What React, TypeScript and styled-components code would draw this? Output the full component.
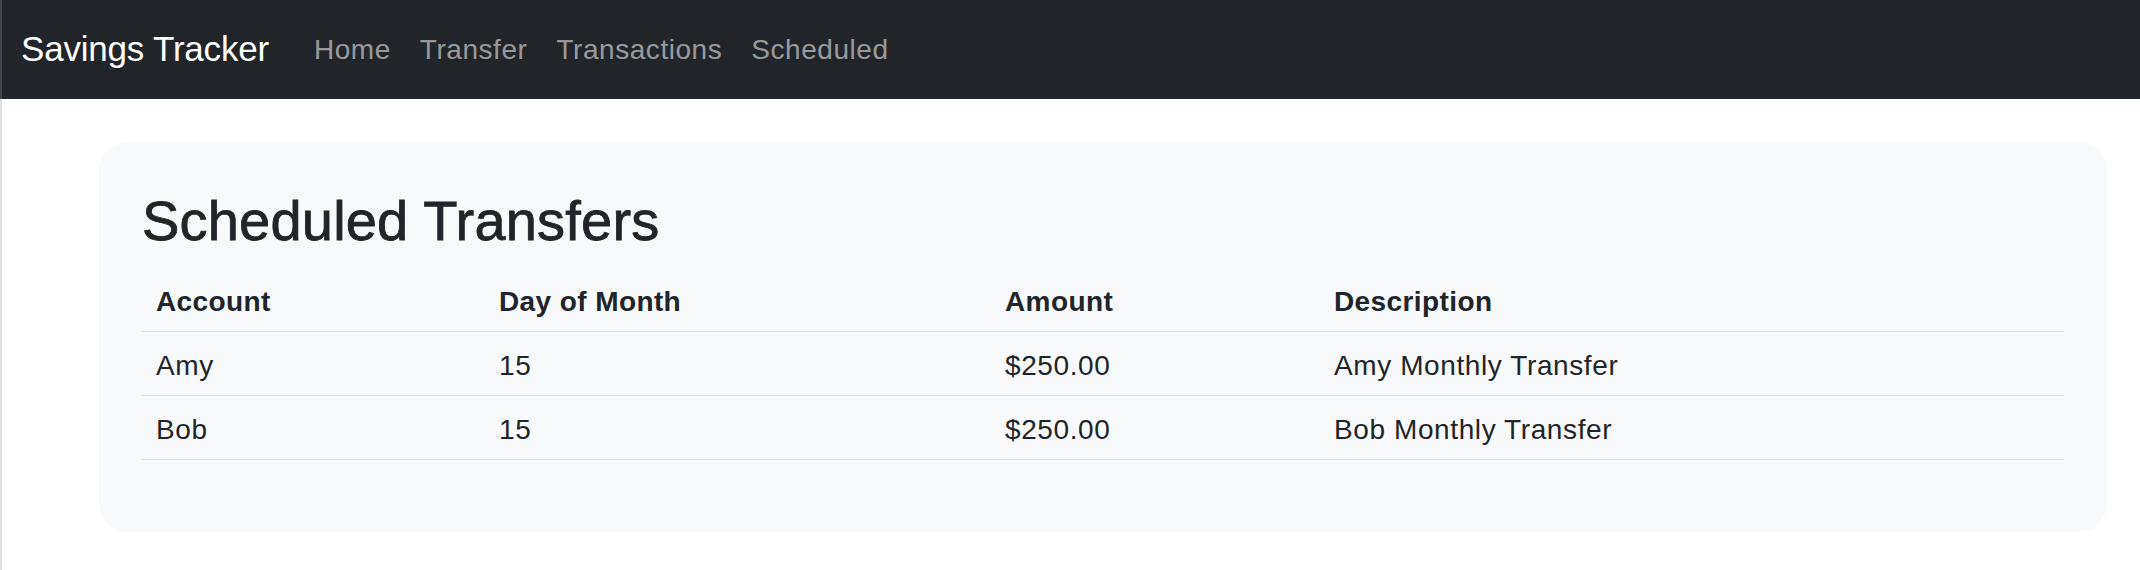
import React from "react";
import styled, { createGlobalStyle } from "styled-components";

const GlobalStyle = createGlobalStyle`
  html, body {
    margin: 0;
    padding: 0;
    background: #ffffff;
  }
  body {
    font-family: "Liberation Sans", Arial, sans-serif;
    color: #212529;
  }
  body::before {
    content: "";
    position: fixed;
    left: 0;
    top: 0;
    bottom: 0;
    width: 2px;
    background: rgba(150, 150, 150, 0.3);
    z-index: 10;
  }
`;

const Navbar = styled.nav`
  box-sizing: border-box;
  height: 99px;
  background: #212529;
  display: flex;
  align-items: center;
  padding: 0 21px;
`;

const Brand = styled.a`
  font-size: 35px;
  line-height: 1.5;
  letter-spacing: -0.2px;
  color: #ffffff;
  text-decoration: none;
  white-space: nowrap;
  margin-right: 45px;
`;

const NavList = styled.ul`
  display: flex;
  align-items: center;
  gap: 29px;
  list-style: none;
  margin: 0;
  padding: 0;
`;

const NavLink = styled.a`
  font-size: 28px;
  line-height: 1.5;
  letter-spacing: 0.55px;
  color: rgba(255, 255, 255, 0.55);
  text-decoration: none;
  white-space: nowrap;
`;

const Card = styled.section`
  margin: 43px 33px 0 99px;
  background: #f8f9fa;
  border-radius: 28px;
  padding: 45px 43px 44px;
`;

const Title = styled.h2`
  margin: 0 0 14px;
  font-size: 56px;
  line-height: 67px;
  font-weight: 500;
  letter-spacing: 0.2px;
  color: #212529;
  -webkit-text-stroke: 0.8px #212529;
`;

const Table = styled.table`
  width: 100%;
  table-layout: fixed;
  border-collapse: collapse;
  margin-bottom: 28px;
`;

const Col = styled.col<{ $width: number }>`
  width: ${(p) => p.$width}px;
`;

const HeadCell = styled.th`
  text-align: left;
  font-size: 28px;
  line-height: 41px;
  font-weight: 700;
  letter-spacing: 0.4px;
  padding: 13px 14px 9px;
  border-bottom: 1px solid #dee2e6;
  color: #212529;
`;

const Cell = styled.td`
  font-size: 28px;
  line-height: 41px;
  letter-spacing: 0.6px;
  padding: 13px 14px 9px;
  border-bottom: 1px solid #dee2e6;
  color: #212529;
  white-space: nowrap;
`;

const links = ["Home", "Transfer", "Transactions", "Scheduled"];

const columns = [
  { label: "Account", width: 343 },
  { label: "Day of Month", width: 506 },
  { label: "Amount", width: 329 },
  { label: "Description", width: 744 },
];

const rows = [
  { account: "Amy", day: 15, amount: 250, description: "Amy Monthly Transfer" },
  { account: "Bob", day: 15, amount: 250, description: "Bob Monthly Transfer" },
];

export default function App() {
  return (
    <>
      <GlobalStyle />
      <Navbar>
        <Brand href="#">Savings Tracker</Brand>
        <NavList>
          {links.map((l) => (
            <li key={l}>
              <NavLink href="#">{l}</NavLink>
            </li>
          ))}
        </NavList>
      </Navbar>
      <Card>
        <Title>Scheduled Transfers</Title>
        <Table>
          <colgroup>
            {columns.map((c) => (
              <Col key={c.label} $width={c.width} />
            ))}
          </colgroup>
          <thead>
            <tr>
              {columns.map((c) => (
                <HeadCell key={c.label}>{c.label}</HeadCell>
              ))}
            </tr>
          </thead>
          <tbody>
            {rows.map((r) => (
              <tr key={r.account}>
                <Cell>{r.account}</Cell>
                <Cell>{r.day}</Cell>
                <Cell>${r.amount.toFixed(2)}</Cell>
                <Cell>{r.description}</Cell>
              </tr>
            ))}
          </tbody>
        </Table>
      </Card>
    </>
  );
}
